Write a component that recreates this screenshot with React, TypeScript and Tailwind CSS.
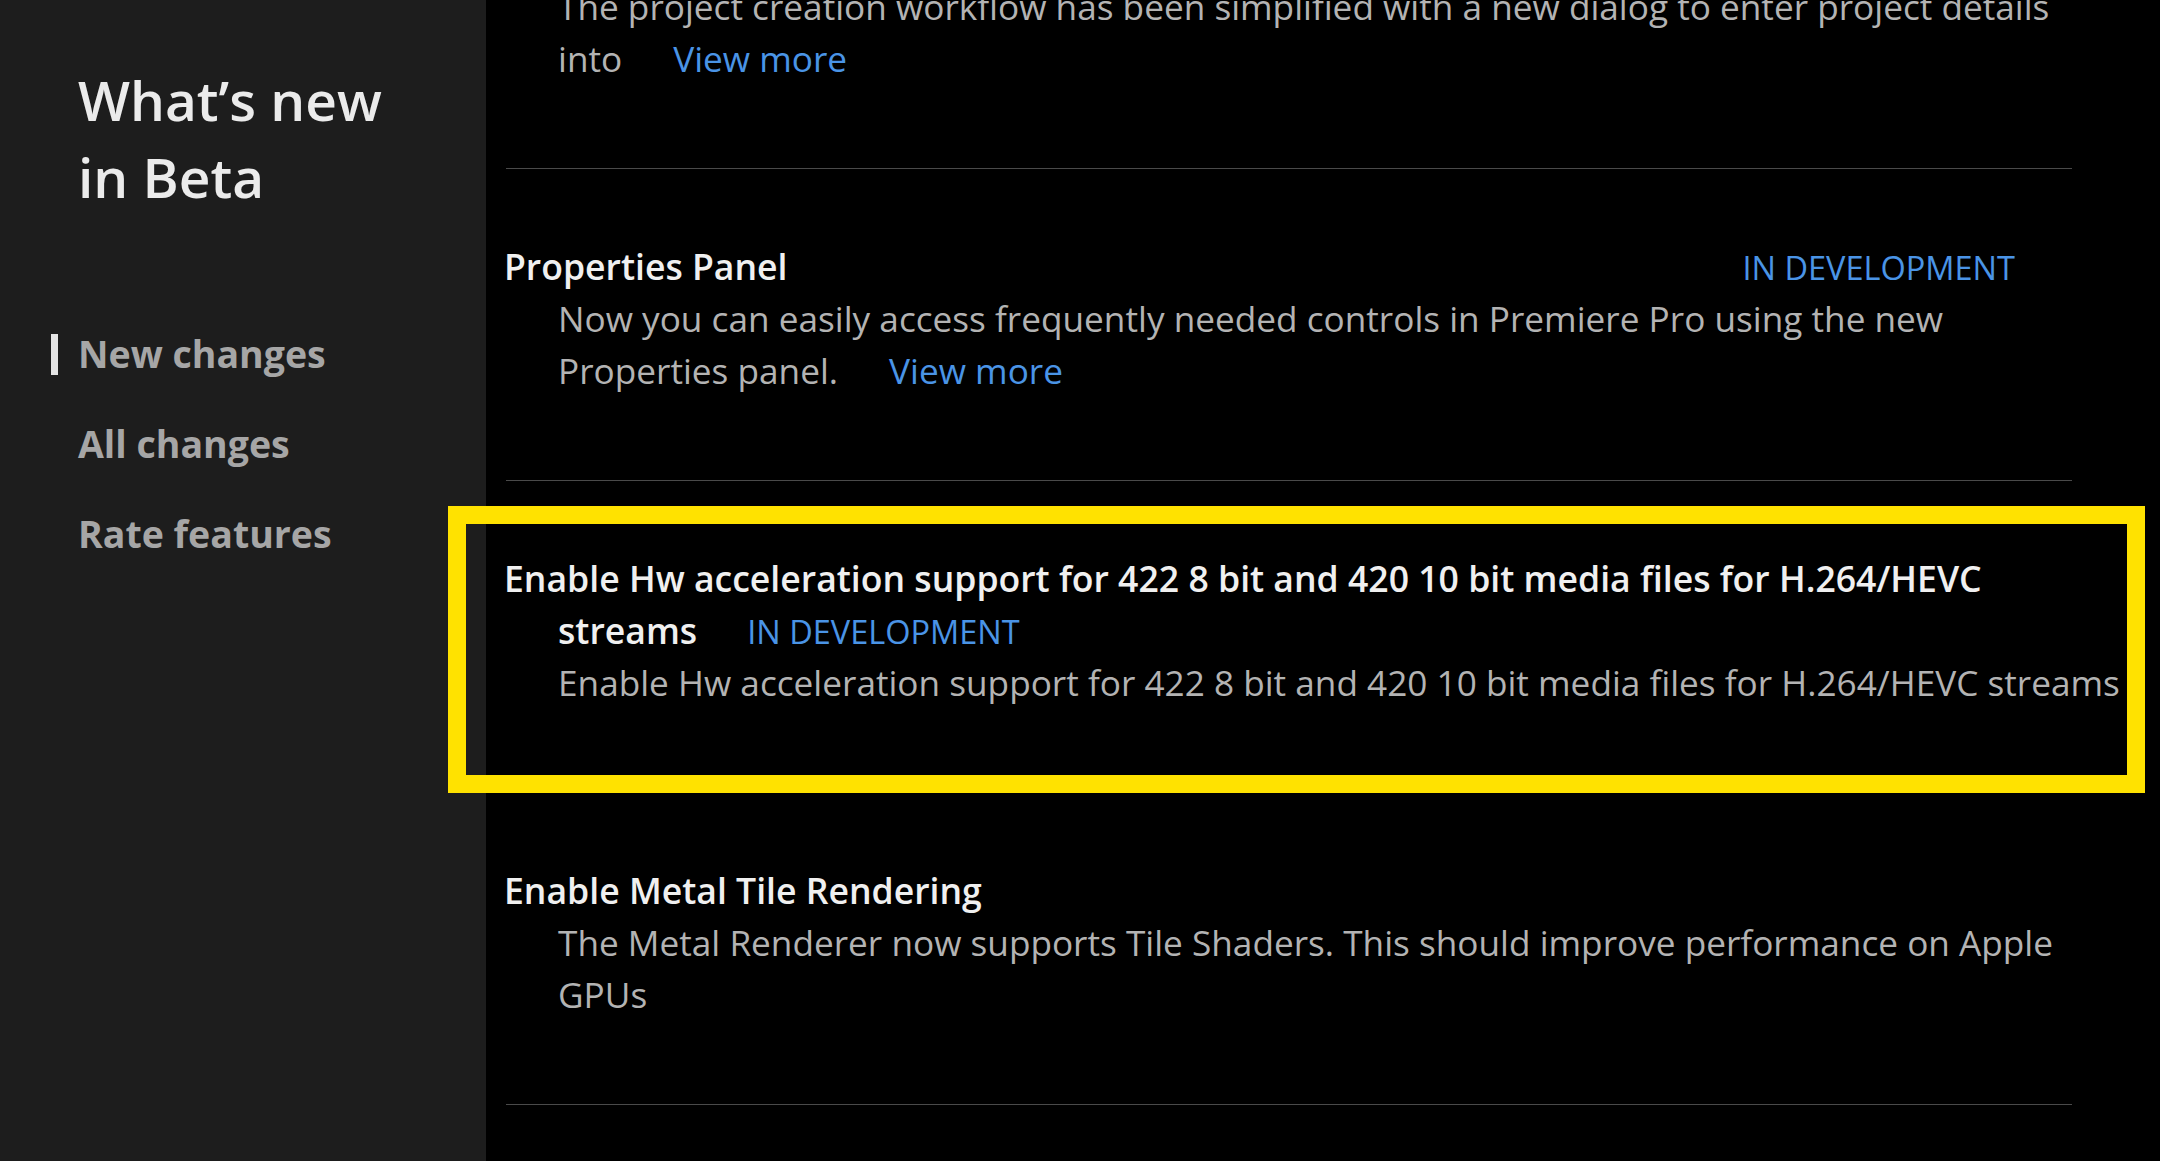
import React from 'react';

type Item = {
  title?: string[];
  status?: 'right' | 'inline';
  body: string[];
  link?: boolean;
  highlight?: boolean;
  partial?: boolean;
};

const ITEMS: Item[] = [
  {
    partial: true,
    body: [
      'The project creation workflow has been simplified with a new dialog to enter project details',
      'into',
    ],
    link: true,
  },
  {
    title: ['Properties Panel'],
    status: 'right',
    body: [
      'Now you can easily access frequently needed controls in Premiere Pro using the new',
      'Properties panel.',
    ],
    link: true,
  },
  {
    title: [
      'Enable Hw acceleration support for 422 8 bit and 420 10 bit media files for H.264/HEVC',
      'streams',
    ],
    status: 'inline',
    body: ['Enable Hw acceleration support for 422 8 bit and 420 10 bit media files for H.264/HEVC streams'],
    highlight: true,
  },
  {
    title: ['Enable Metal Tile Rendering'],
    body: [
      'The Metal Renderer now supports Tile Shaders. This should improve performance on Apple',
      'GPUs',
    ],
  },
];

const NAV = ['New changes', 'All changes', 'Rate features'];

const Status = ({ className = '' }: { className?: string }) => (
  <span className={`text-[32.5px] font-normal text-[#4a94e6] ${className}`}>IN DEVELOPMENT</span>
);

const ChangeItem = ({ item }: { item: Item }) => {
  const lastTitle = item.title ? item.title.length - 1 : -1;
  return (
    <div>
      <div
        className={`relative pr-[145px] ${item.partial ? 'mt-[-20px] pb-[84px]' : 'pt-[71px] pb-[84px]'}`}
      >
        {item.title && (
          <div className="text-[35.6px] font-semibold leading-[52px] text-[#f0f0f0]">
            {item.title.map((line, i) => (
              <div
                key={i}
                className={`flex h-[52px] items-baseline whitespace-nowrap ${i > 0 ? 'pl-[54px]' : ''}`}
              >
                <span>{line}</span>
                {i === lastTitle && item.status === 'right' && <Status className="ml-auto" />}
                {i === lastTitle && item.status === 'inline' && <Status className="ml-[50px]" />}
              </div>
            ))}
          </div>
        )}

        <div className="pl-[54px] text-[35.2px] leading-[52px] text-[#b3b3b3]">
          {item.body.map((line, i) => (
            <div key={i} className="whitespace-nowrap">
              {line}
              {item.link && i === item.body.length - 1 && (
                <a href="#" className="ml-[51px] text-[#4a94e6]">
                  View more
                </a>
              )}
            </div>
          ))}
        </div>

        {item.highlight && (
          <div className="pointer-events-none absolute left-[-56px] top-[25px] h-[287px] w-[1697px] border-[18px] border-[#ffe200]" />
        )}
      </div>
      <div className="ml-[2px] mr-[88px] h-px bg-[#4a4a4a]" />
    </div>
  );
};

export default function App() {
  return (
    <div className="flex h-[1161px] w-[2160px] overflow-hidden bg-black font-['Open_Sans',sans-serif]">
      {/* Sidebar */}
      <aside className="w-[486px] shrink-0 bg-[#1d1d1d] pt-[61px]">
        <h1 className="pl-[78px] text-[55px] font-semibold leading-[77px] text-[#ebebeb]">
          What’s new
          <br />
          in Beta
        </h1>

        <nav className="mt-[113px] flex flex-col gap-[38px]">
          {NAV.map((label, i) => (
            <div key={label} className="flex items-center pl-[51px]">
              <span className={`h-[41px] w-[7px] ${i === 0 ? 'bg-[#e4e4e4]' : 'bg-transparent'}`} />
              <span className="ml-[20px] text-[37.5px] font-bold leading-[52px] text-[#a6a6a6]">
                {label}
              </span>
            </div>
          ))}
        </nav>
      </aside>

      {/* Change list */}
      <main className="min-w-0 flex-1 pl-[18px]">
        {ITEMS.map((item, i) => (
          <ChangeItem key={i} item={item} />
        ))}
      </main>
    </div>
  );
}
